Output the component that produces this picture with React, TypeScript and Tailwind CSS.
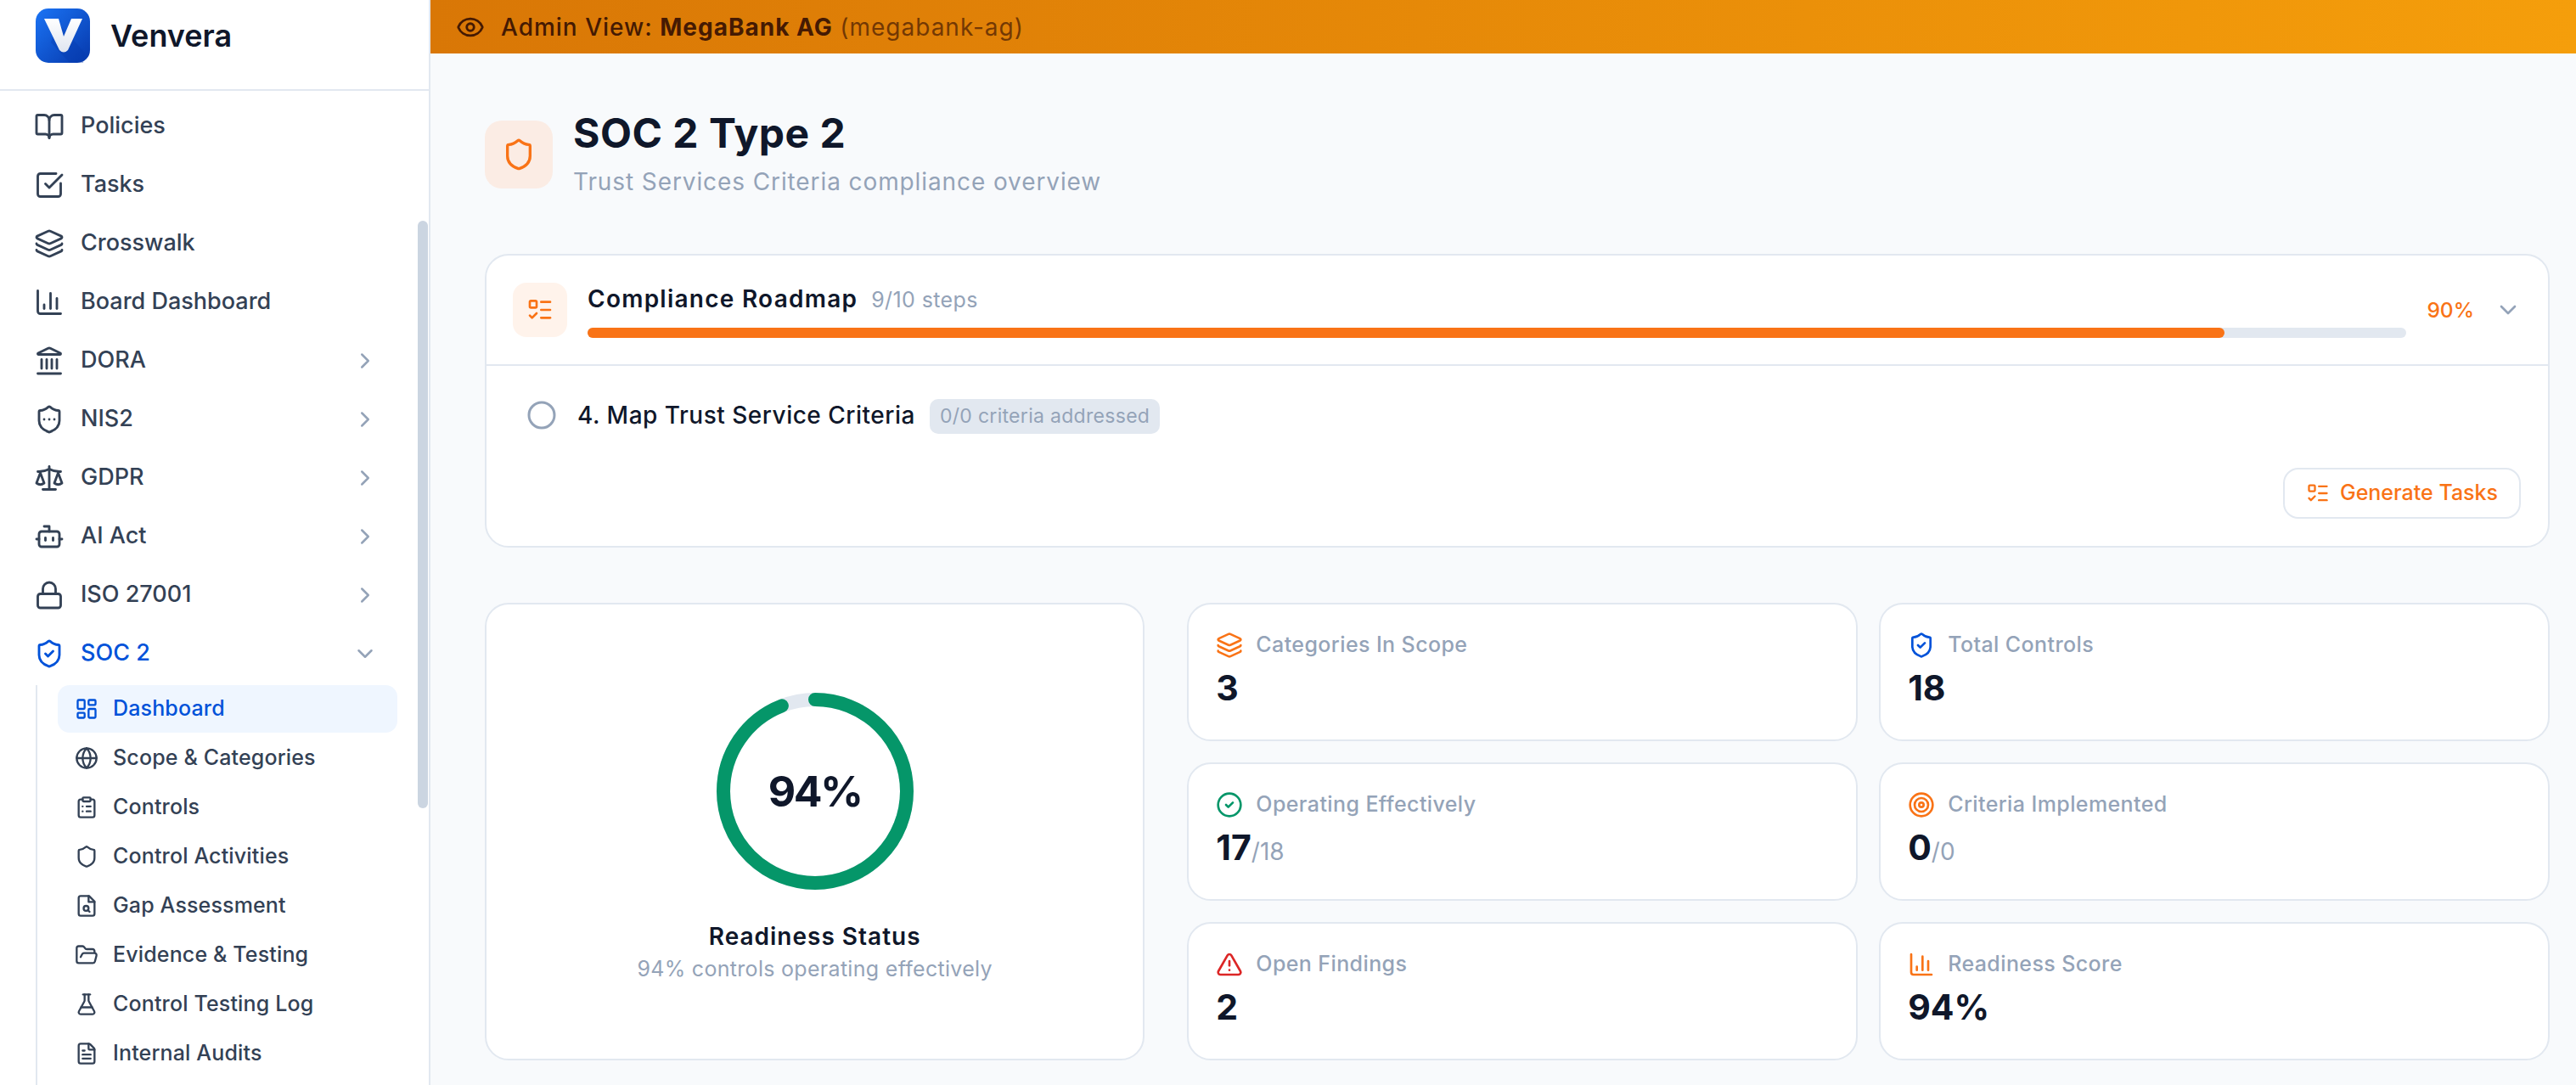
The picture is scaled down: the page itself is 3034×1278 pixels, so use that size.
import {
  BookOpen,
  Bot,
  ChartColumn,
  ChevronDown,
  ChevronRight,
  Circle,
  CircleCheck,
  ClipboardList,
  Eye,
  FileText,
  FlaskConical,
  FolderOpen,
  Globe,
  Landmark,
  Layers,
  LayoutDashboard,
  ListTodo,
  Lock,
  Scale,
  Shield,
  ShieldCheck,
  ShieldEllipsis,
  SquareCheckBig,
  Target,
  TriangleAlert,
} from "lucide-react";
import type { ComponentType, ReactNode } from "react";

type IconType = ComponentType<{ className?: string; strokeWidth?: number }>;

function FileLens({ className }: { className?: string }) {
  return (
    <svg
      viewBox="0 0 24 24"
      fill="none"
      stroke="currentColor"
      strokeWidth="2"
      strokeLinecap="round"
      strokeLinejoin="round"
      className={className}
    >
      <path d="M14.5 2H6a2 2 0 0 0-2 2v16a2 2 0 0 0 2 2h12a2 2 0 0 0 2-2V7.5L14.5 2z" />
      <path d="M14 2v6h6" />
      <circle cx="11.5" cy="14.5" r="2.5" />
      <path d="M13.25 16.25 15 18" />
    </svg>
  );
}

const NAV_ITEMS: { label: string; icon: IconType; sub?: boolean }[] = [
  { label: "Policies", icon: BookOpen },
  { label: "Tasks", icon: SquareCheckBig },
  { label: "Crosswalk", icon: Layers },
  { label: "Board Dashboard", icon: ChartColumn },
  { label: "DORA", icon: Landmark, sub: true },
  { label: "NIS2", icon: ShieldEllipsis, sub: true },
  { label: "GDPR", icon: Scale, sub: true },
  { label: "AI Act", icon: Bot, sub: true },
  { label: "ISO 27001", icon: Lock, sub: true },
];

const SOC_ITEMS: { label: string; icon: IconType; active?: boolean }[] = [
  { label: "Dashboard", icon: LayoutDashboard, active: true },
  { label: "Scope & Categories", icon: Globe },
  { label: "Controls", icon: ClipboardList },
  { label: "Control Activities", icon: Shield },
  { label: "Gap Assessment", icon: FileLens },
  { label: "Evidence & Testing", icon: FolderOpen },
  { label: "Control Testing Log", icon: FlaskConical },
  { label: "Internal Audits", icon: FileText },
];

function Logo() {
  return (
    <svg viewBox="0 0 64 64" className="w-[64px] h-[64px] shrink-0">
      <defs>
        <linearGradient id="logoBg" x1="0" y1="0" x2="1" y2="1">
          <stop offset="0" stopColor="#1b74f5" />
          <stop offset="1" stopColor="#0638ab" />
        </linearGradient>
        <linearGradient id="logoV" x1="0" y1="0" x2="0" y2="1">
          <stop offset="0" stopColor="#ffffff" />
          <stop offset="1" stopColor="#dfe5f0" />
        </linearGradient>
      </defs>
      <rect width="64" height="64" rx="15" fill="url(#logoBg)" />
      <path d="M26 17 L58 52 L56 64 L40 64 L18 40 Z" fill="#0638ab" opacity="0.35" />
      <path
        d="M10 12 H27 L33 33 L42 12 H55 L38 49 Q33 54 28 49 Z"
        fill="url(#logoV)"
      />
    </svg>
  );
}

function NavRow({ label, icon: Icon, sub }: { label: string; icon: IconType; sub?: boolean }) {
  return (
    <div className="h-[69px] flex items-center gap-[19px] pl-[40px] pr-[60px] text-[#334155]">
      <Icon className="w-[36px] h-[36px] shrink-0" strokeWidth={1.9} />
      <span className="flex-1 text-[27px] font-medium">{label}</span>
      {sub && <ChevronRight className="w-[30px] h-[30px] text-[#94a3b8]" />}
    </div>
  );
}

function Sidebar() {
  return (
    <aside className="relative w-[507px] shrink-0 h-full flex flex-col bg-white border-r-2 border-[#e2e8f0] overflow-hidden">
      <div className="h-[107px] shrink-0 flex items-start gap-[24px] pl-[42px] pt-[10px] border-b-2 border-[#e2e8f0]">
        <Logo />
        <span className="text-[36px] leading-[64px] font-semibold text-[#0f172a]">Venvera</span>
      </div>
      <nav className="flex-1 flex flex-col pt-[7px]">
        {NAV_ITEMS.map((item) => (
          <NavRow key={item.label} {...item} />
        ))}
        <div className="h-[69px] flex items-center gap-[19px] pl-[40px] pr-[60px] text-[#0052d9]">
          <ShieldCheck className="w-[36px] h-[36px] shrink-0" strokeWidth={1.9} />
          <span className="flex-1 text-[27px] font-medium">SOC 2</span>
          <ChevronDown className="w-[30px] h-[30px] text-[#94a3b8]" />
        </div>
        <div className="flex-1 mt-[3px] ml-[42px] pl-[24px] pr-[37px] border-l-2 border-[#e2e8f0] flex flex-col gap-[2px]">
          {SOC_ITEMS.map(({ label, icon: Icon, active }) => (
            <div
              key={label}
              className={`h-[56px] shrink-0 flex items-center gap-[17px] pl-[20px] rounded-[14px] ${
                active ? "bg-[#eff6ff] text-[#0052d9]" : "text-[#334155]"
              }`}
            >
              <Icon className="w-[28px] h-[28px] shrink-0" />
              <span className="text-[25px] font-medium tracking-[0.15px]">{label}</span>
            </div>
          ))}
        </div>
      </nav>
      {/* scrollbar thumb */}
      <div className="absolute top-[260px] right-[1px] w-[12px] h-[692px] rounded-full bg-[#cbd5e1]" />
    </aside>
  );
}

function StatCard({
  icon,
  label,
  value,
  total,
}: {
  icon: ReactNode;
  label: string;
  value: string;
  total?: string;
}) {
  return (
    <div className="h-[163px] bg-white border-2 border-[#e2e8f0] rounded-[28px] p-[32px]">
      <div className="h-[32px] flex items-center gap-[15px]">
        {icon}
        <span className="text-[25px] font-medium tracking-[0.4px] text-[#94a3b8]">{label}</span>
      </div>
      <div className="mt-[10px] flex items-baseline leading-[48px]">
        <span className="text-[41px] font-bold text-[#0f172a]">{value}</span>
        {total && <span className="text-[28px] text-[#94a3b8]">{total}</span>}
      </div>
    </div>
  );
}

function ReadinessRing() {
  return (
    <div className="relative w-[232px] h-[232px]">
      <svg viewBox="0 0 232 232" className="w-full h-full -rotate-90">
        <circle cx="116" cy="116" r="108" fill="none" stroke="#e2e8f0" strokeWidth="16" />
        <circle
          cx="116"
          cy="116"
          r="108"
          fill="none"
          stroke="#059669"
          strokeWidth="16"
          strokeLinecap="round"
          strokeDasharray="637.9 678.6"
        />
      </svg>
      <div className="absolute inset-0 flex items-center justify-center text-[50px] font-bold tracking-[-2.5px] text-[#0f172a]">
        94%
      </div>
    </div>
  );
}

export default function App() {
  return (
    <div className="w-[3034px] h-[1278px] flex overflow-hidden bg-[#f8fafc] font-['Inter',sans-serif]">
      <Sidebar />
      <main className="flex-1 min-w-0 flex flex-col">
        <div className="h-[63px] shrink-0 flex items-center gap-[19px] pl-[30px] bg-linear-to-r from-[#d97706] to-[#f59e0b] text-[#451a03]">
          <Eye className="w-[34px] h-[34px]" />
          <span className="text-[28px] font-medium tracking-[1px]">
            Admin View: <span className="font-bold">MegaBank AG</span>{" "}
            <span className="opacity-70 font-normal">(megabank-ag)</span>
          </span>
        </div>

        <div className="pl-[64px] pr-[31px] pt-[67px]">
          {/* Title */}
          <div className="flex items-center gap-[24px]">
            <div className="w-[80px] h-[80px] rounded-[20px] bg-[#fbece4] flex items-center justify-center">
              <Shield className="w-[40px] h-[40px] text-[#f97316]" />
            </div>
            <div>
              <h1 className="text-[48px] leading-[54px] font-bold tracking-[0.5px] text-[#0f172a]">
                SOC 2 Type 2
              </h1>
              <p className="mt-[10px] text-[28px] leading-[40px] tracking-[0.9px] text-[#94a3b8]">
                Trust Services Criteria compliance overview
              </p>
            </div>
          </div>

          {/* Roadmap */}
          <section className="mt-[65px] bg-white border-2 border-[#e2e8f0] rounded-[28px]">
            <div className="h-[130px] flex items-center gap-[24px] px-[31px] border-b-2 border-[#e2e8f0]">
              <div className="w-[64px] h-[64px] rounded-[16px] bg-[#fff3eb] flex items-center justify-center shrink-0">
                <ListTodo className="w-[32px] h-[32px] text-[#f97316]" />
              </div>
              <div className="flex-1 min-w-0">
                <div className="flex items-baseline gap-[16px] leading-[40px]">
                  <span className="text-[28px] font-semibold tracking-[1.25px] text-[#0f172a]">
                    Compliance Roadmap
                  </span>
                  <span className="text-[25px] tracking-[0.4px] text-[#94a3b8]">9/10 steps</span>
                </div>
                <div className="mt-[13px] h-[12px] rounded-full bg-[#e2e8f0]">
                  <div className="h-full w-[90%] rounded-full bg-[#f97316]" />
                </div>
              </div>
              <span className="text-[24.5px] font-medium text-[#f97316]">90%</span>
              <ChevronDown className="w-[32px] h-[32px] text-[#94a3b8]" />
            </div>
            <div className="pt-[37px] pb-[32px] pl-[47px] pr-[32px]">
              <div className="h-[41px] flex items-center">
                <Circle className="w-[36px] h-[36px] text-[#94a3b8] shrink-0" />
                <span className="ml-[24px] text-[28px] font-medium tracking-[0.5px] text-[#0f172a]">
                  4. Map Trust Service Criteria
                </span>
                <span className="ml-[17px] mt-[3px] h-[41px] px-[12px] flex items-center rounded-[10px] bg-[#e2e8f0] text-[23px] tracking-[0.3px] text-[#94a3b8]">
                  0/0 criteria addressed
                </span>
              </div>
              <div className="mt-[42px] flex justify-end">
                <button className="h-[60px] px-[25px] flex items-center gap-[12px] rounded-[18px] border-2 border-[#e2e8f0] text-[25px] font-medium text-[#f97316]">
                  <ListTodo className="w-[28px] h-[28px]" />
                  Generate Tasks
                </button>
              </div>
            </div>
          </section>

          {/* Stats */}
          <div className="mt-[65px] grid grid-cols-3 gap-[50px]">
            <div className="bg-white border-2 border-[#e2e8f0] rounded-[28px] flex flex-col items-center pt-[104px]">
              <ReadinessRing />
              <div className="mt-[35px] text-[28px] leading-[40px] font-semibold tracking-[1px] text-[#0f172a]">
                Readiness Status
              </div>
              <div className="text-[25px] leading-[36px] tracking-[0.3px] text-[#94a3b8]">
                94% controls operating effectively
              </div>
            </div>
            <div className="col-span-2 grid grid-cols-2 gap-[25px]">
              <StatCard
                icon={<Layers className="w-[32px] h-[32px] text-[#f97316]" />}
                label="Categories In Scope"
                value="3"
              />
              <StatCard
                icon={<ShieldCheck className="w-[32px] h-[32px] text-[#0052d9]" />}
                label="Total Controls"
                value="18"
              />
              <StatCard
                icon={<CircleCheck className="w-[32px] h-[32px] text-[#059669]" />}
                label="Operating Effectively"
                value="17"
                total="/18"
              />
              <StatCard
                icon={<Target className="w-[32px] h-[32px] text-[#f97316]" />}
                label="Criteria Implemented"
                value="0"
                total="/0"
              />
              <StatCard
                icon={<TriangleAlert className="w-[32px] h-[32px] text-[#dc2626]" />}
                label="Open Findings"
                value="2"
              />
              <StatCard
                icon={<ChartColumn className="w-[32px] h-[32px] text-[#f97316]" />}
                label="Readiness Score"
                value="94%"
              />
            </div>
          </div>
        </div>
      </main>
    </div>
  );
}
